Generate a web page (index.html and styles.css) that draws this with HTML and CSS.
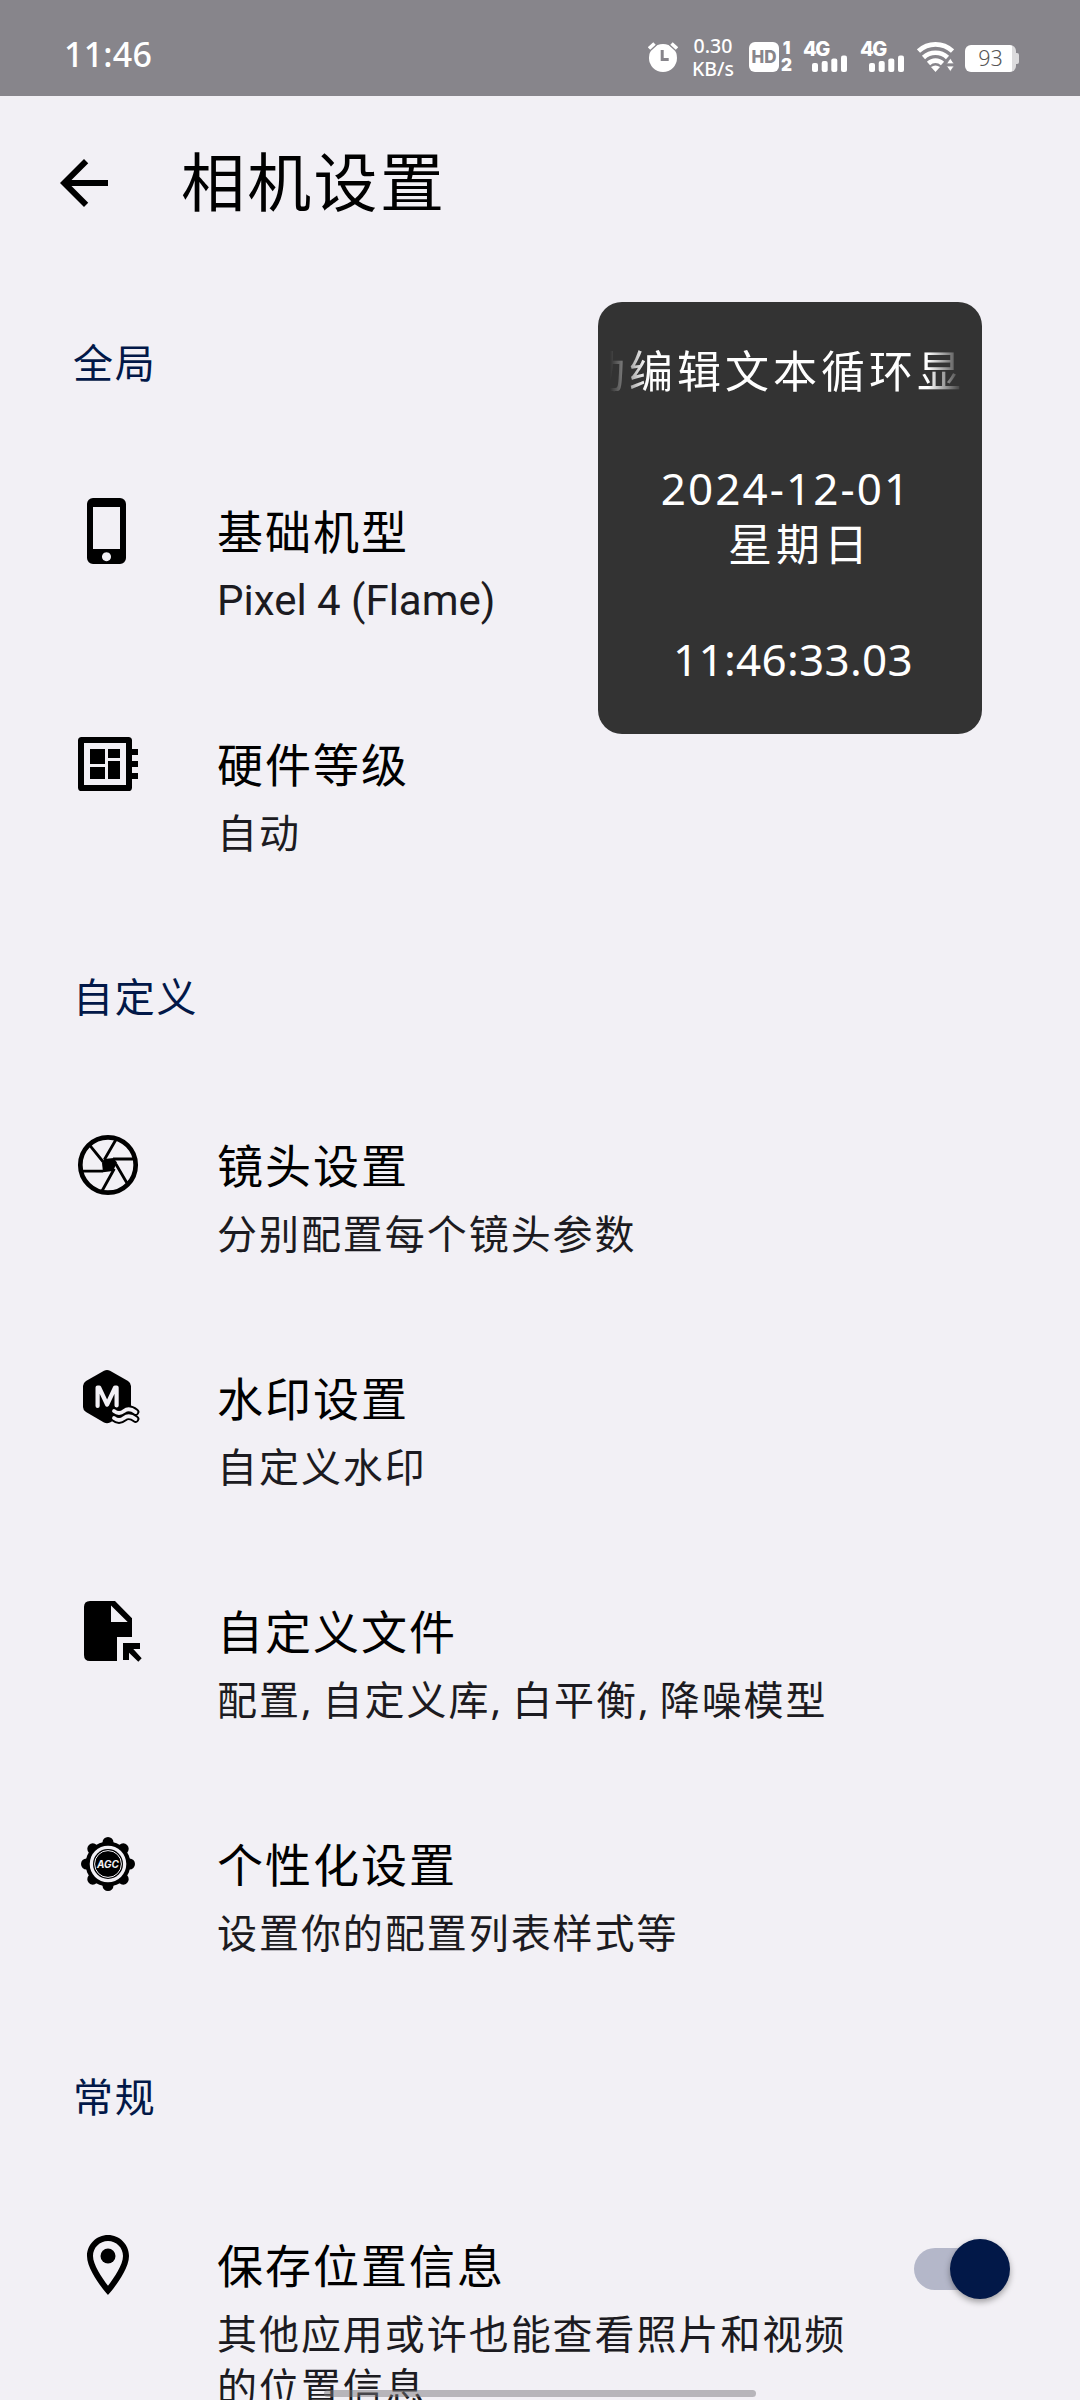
FILE: index.html
```html
<!DOCTYPE html>
<html lang="zh-CN">
<head>
<meta charset="utf-8">
<title>相机设置</title>
<link rel="stylesheet" href="styles.css">
</head>
<body>
<div class="screen">
  <header class="status">
    <span class="clock">11:46</span>
    <div class="indicators">
      <svg class="alarm" width="30" height="30" viewBox="0 0 30 30"><circle cx="15" cy="16" r="14" fill="#fff"/><path d="M1 6 6.500 1M29 6 23.500 1" stroke="#87858b" stroke-width="7"/><path d="M1 6.500 6.500 1.500M29 6.500 23.500 1.500" stroke="#fff" stroke-width="3.600"/><path d="M14.200 8v9.500h6.500" fill="none" stroke="#87858b" stroke-width="3"/></svg>
      <div class="speed"><span>0.30</span><span>KB/s</span></div>
      <div class="hd"><b class="hd-box">HD</b><span class="sims"><b>1</b><b>2</b></span></div>
      <div class="signal"><b>4G</b><svg width="36" height="17" viewBox="0 0 36 17" fill="#fff"><rect y="8" width="6" height="9" rx="2"/><rect x="9.700" y="6" width="6" height="11" rx="2"/><rect x="19.300" y="3.500" width="6" height="13.500" rx="2"/><rect x="29" y=".5" width="6" height="16.500" rx="2"/></svg></div>
      <div class="signal"><b>4G</b><svg width="36" height="17" viewBox="0 0 36 17" fill="#fff"><rect y="8" width="6" height="9" rx="2"/><rect x="9.700" y="6" width="6" height="11" rx="2"/><rect x="19.300" y="3.500" width="6" height="13.500" rx="2"/><rect x="29" y=".5" width="6" height="16.500" rx="2"/></svg></div>
      <svg class="wifi" width="37" height="30" viewBox="0 0 37 30"><g fill="none" stroke="#fff" stroke-width="4.600"><path d="M1.500 9a25 25 0 0 1 34 0"/><path d="M6.500 15.500a17.500 17.500 0 0 1 24 0"/><path d="M11.500 21.500a10 10 0 0 1 14 0"/></g><path d="M14 25q4.500-3 9 0l-4.500 5z" fill="#fff"/><path d="M29.500 21.800l3.800-5.600 3.800 5.600zM29.500 24l3.800 5.600 3.800-5.600z" fill="#fff" stroke="#87858b" stroke-width=".8"/></svg>
      <div class="battery"><span>93</span></div>
    </div>
  </header>

  <div class="appbar">
    <svg width="72" height="72" viewBox="0 0 24 24"><path d="M20 11H7.830l5.590-5.590L12 4l-8 8 8 8 1.410-1.410L7.830 13H20v-2z"/></svg>
    <h1>相机设置</h1>
  </div>

  <main>
    <h2>全局</h2>
    <div class="row">
      <svg class="icon" viewBox="0 0 72 72"><path fill-rule="evenodd" d="M21 3h27a6 6 0 0 1 6 6v54a6 6 0 0 1-6 6H21a6 6 0 0 1-6-6V9a6 6 0 0 1 6-6zM21 12v42h27V12zM34.500 57.200a4.500 4.500 0 1 0 .01 0z"/></svg>
      <div class="text"><h3>基础机型</h3><p class="latin">Pixel 4 (Flame)</p></div>
    </div>
    <div class="row">
      <svg class="icon" viewBox="0 0 24 24"><path fill-rule="evenodd" d="M22 9V7h-2V4.200Q20 3 18.800 3H3.200Q2 3 2 4.200v15.600Q2 21 3.200 21h15.600Q20 21 20 19.800V17h2v-2h-2v-2h2v-2h-2V9zM18 19H4V5h14zM6 13h5v4H6zM12 7h4v3h-4zM6 7h5v5H6zM12 11h4v6h-4z"/></svg>
      <div class="text"><h3>硬件等级</h3><p>自动</p></div>
    </div>

    <h2>自定义</h2>
    <div class="row">
      <svg class="icon" viewBox="0 0 72 72"><g fill="none" stroke="#000"><circle cx="36" cy="36" r="27.700" stroke-width="4.700"/><path stroke-width="2.800" d="M17 15.300 31.300 33M44 10.500 32.300 30.700M63 30H41M55.500 55 43.700 34.700M30 62 42.300 39.700M9.500 42.200H31"/></g><path d="M30 34 32.500 30 41.500 29 45 33.500 41 42 31 43.300z"/></svg>
      <div class="text"><h3>镜头设置</h3><p>分别配置每个镜头参数</p></div>
    </div>
    <div class="row">
      <svg class="icon" viewBox="0 0 72 72"><path d="M32 8.700q3-1.500 6 0L56 19q3 2 3 5v21q0 3-3 5L38 60.500q-3 1.500-6 0L14 50q-3-2-3-5V24q0-3 3-5z"/><path d="M25.600 44V25.500h1.500l8 17 8-17h1.500v18" fill="none" stroke="#f2f0f5" stroke-width="4.200" stroke-linecap="round" stroke-linejoin="round"/><g fill="none" stroke-linecap="round"><path d="M42 49q5 4 10 0t11.500 1M42 56q5 4 10 0t11.500 1" stroke="#000" stroke-width="7.600"/><path d="M42 49q5 4 10 0t11.500 1M42 56q5 4 10 0t11.500 1" stroke="#f2f0f5" stroke-width="3.800"/></g></svg>
      <div class="text"><h3>水印设置</h3><p>自定义水印</p></div>
    </div>
    <div class="row">
      <svg class="icon" viewBox="0 0 72 72"><path fill-rule="evenodd" d="M18 6H43L60 23.300V42H45V66H18q-6 0-6-6V12q0-6 6-6zM39 10.500V27H55.700zM51 48H68v6H61.300L69.700 63.300 66.300 66.700 57 57.700V65H51z"/></svg>
      <div class="text"><h3>自定义文件</h3><p>配置, 自定义库, 白平衡, 降噪模型</p></div>
    </div>
    <div class="row">
      <svg class="icon" viewBox="0 0 72 72"><circle cx="36" cy="36" r="22.500"/><g stroke="#000" stroke-width="11" stroke-linecap="round"><path d="M36 14.500v43M14.500 36h43M20.800 20.800l30.400 30.400M20.800 51.200l30.400-30.400"/></g><circle cx="36" cy="36" r="18.300" fill="#f2f0f5"/><circle cx="36" cy="36" r="15"/><circle cx="36" cy="36" r="13.400" fill="none" stroke="#f2f0f5" stroke-width="1"/><text x="36" y="39.500" class="agc">AGC</text></svg>
      <div class="text"><h3>个性化设置</h3><p>设置你的配置列表样式等</p></div>
    </div>

    <h2>常规</h2>
    <div class="row">
      <svg class="icon" viewBox="0 0 24 24"><path d="M12 2C8.130 2 5 5.130 5 9c0 5.250 7 13 7 13s7-7.750 7-13c0-3.870-3.130-7-7-7zM7 9c0-2.760 2.240-5 5-5s5 2.240 5 5c0 2.880-2.880 7.190-5 9.880C9.920 16.210 7 11.850 7 9z"/><circle cx="12" cy="9" r="2.500"/></svg>
      <div class="text"><h3>保存位置信息</h3><p>其他应用或许也能查看照片和视频的位置信息</p></div>
      <div class="switch"><span class="thumb"></span></div>
    </div>
  </main>

  <aside class="widget">
    <div class="marquee"><span>动编辑文本循环显示</span></div>
    <div class="date">2024-12-01</div>
    <div class="weekday">星期日</div>
    <div class="time">11:46:33.03</div>
  </aside>
  <div class="homebar"></div>
</div>
</body>
</html>
```
FILE: styles.css
```css
* { box-sizing: border-box; }
body { margin: 0; background: #f2f0f5; font-family: "Noto Sans", "Noto Sans CJK SC", sans-serif; color: #000; }
h1, h2, h3, p { margin: 0; font-weight: 400; }
svg { display: block; flex: none; }
.screen { position: relative; width: 1080px; height: 2400px; overflow: hidden; }

.status { height: 96px; background: #87858b; color: #fff; display: flex; justify-content: space-between; padding: 0 61px 0 64px; }
.clock { font-size: 34px; font-weight: 500; line-height: 48px; margin-top: 30px; letter-spacing: .2px; }
.indicators { display: flex; align-items: flex-start; padding-top: 42px; }
.speed { display: flex; flex-direction: column; align-items: center; width: 44px; margin: -8px 14px 0 13px; font-size: 19.5px; font-weight: 500; line-height: 23px; }
.hd { display: flex; gap: 2px; margin-right: 11px; }
.hd-box { width: 30px; height: 30px; border-radius: 6px; background: #fff; color: #87858b; font: 800 17px/30px "Inter", sans-serif; text-align: center; }
.sims { display: flex; flex-direction: column; width: 11px; font: 800 17px/17px "Inter", sans-serif; text-align: center; margin-top: -2px; }
.signal { width: 45px; margin-right: 12px; height: 30px; display: flex; flex-direction: column; }
.signal b { font: 800 20px/14px "Inter", sans-serif; letter-spacing: -1.5px; height: 13px; }
.signal svg { margin-left: 9px; }
.wifi { margin-right: 11px; }
.battery { position: relative; width: 51px; height: 27px; margin: 3px 3px 0 0; border-radius: 6px; background: linear-gradient(90deg, #fff 93%, #dcdbdd 93%); color: #555; font-size: 21.500px; font-weight: 300; line-height: 25px; text-align: center; }
.battery::after { content: ""; position: absolute; left: 51px; top: 8px; width: 3px; height: 11px; border-radius: 0 2px 2px 0; background: #dcdbdd; }

.appbar { height: 180px; display: flex; align-items: flex-start; padding: 51px 0 0 48px; }
.appbar h1 { margin: -5px 0 0 61px; font-size: 64px; line-height: 80px; letter-spacing: 2.3px; }

h2 { height: 168px; padding: 57px 0 0 73px; font-size: 40px; line-height: 60px; letter-spacing: 1.8px; color: #021848; }
.row { height: 233px; display: flex; padding-left: 72px; }
.row .icon { width: 72px; height: 72px; margin-top: 51px; }
.text { width: 650px; margin-left: 73px; padding-top: 55px; }
.text h3 { font-size: 46px; line-height: 64px; letter-spacing: 2px; }
.text p { margin-top: 10px; font-size: 40px; line-height: 53px; letter-spacing: 1.95px; word-spacing: -3.3px; color: #1c1b21; }
.text .latin { padding-top: 1px; font-family: "Roboto", sans-serif; font-size: 42px; letter-spacing: 0; word-spacing: 0; }
.agc { font: italic 700 10px "Inter", sans-serif; fill: #f2f0f5; text-anchor: middle; }
.switch { width: 90px; height: 42px; margin: 70px 0 0 47px; border-radius: 21px; background: #b4b7c9; display: flex; align-items: center; justify-content: flex-end; }
.thumb { flex: none; width: 60px; height: 60px; margin-right: -6px; border-radius: 50%; background: #021848; box-shadow: 0 3px 6px rgba(0,0,0,.35); }

.widget { position: absolute; left: 598px; top: 302px; width: 384px; height: 432px; border-radius: 24px; background: #333; color: #fff; padding: 37px 12px 0; font-size: 44px; text-align: center; }
.marquee { height: 64px; line-height: 64px; overflow: hidden; white-space: nowrap; text-align: left; letter-spacing: 4px; -webkit-mask-image: linear-gradient(90deg, transparent, #000 36px, #000 calc(100% - 42px), transparent 98%); mask-image: linear-gradient(90deg, transparent, #000 36px, #000 calc(100% - 42px), transparent 98%); }
.marquee span { margin-left: -29px; }
.date { margin-top: 55px; line-height: 60px; letter-spacing: 2.1px; padding-right: 8px; }
.weekday { line-height: 52px; letter-spacing: 4px; padding-left: 20px; }
.time { margin-top: 59px; line-height: 60px; letter-spacing: .3px; padding-left: 6px; }
.homebar { position: absolute; left: 324px; top: 2390px; width: 432px; height: 7px; border-radius: 4px; background: rgba(120,118,122,.48); }
```
